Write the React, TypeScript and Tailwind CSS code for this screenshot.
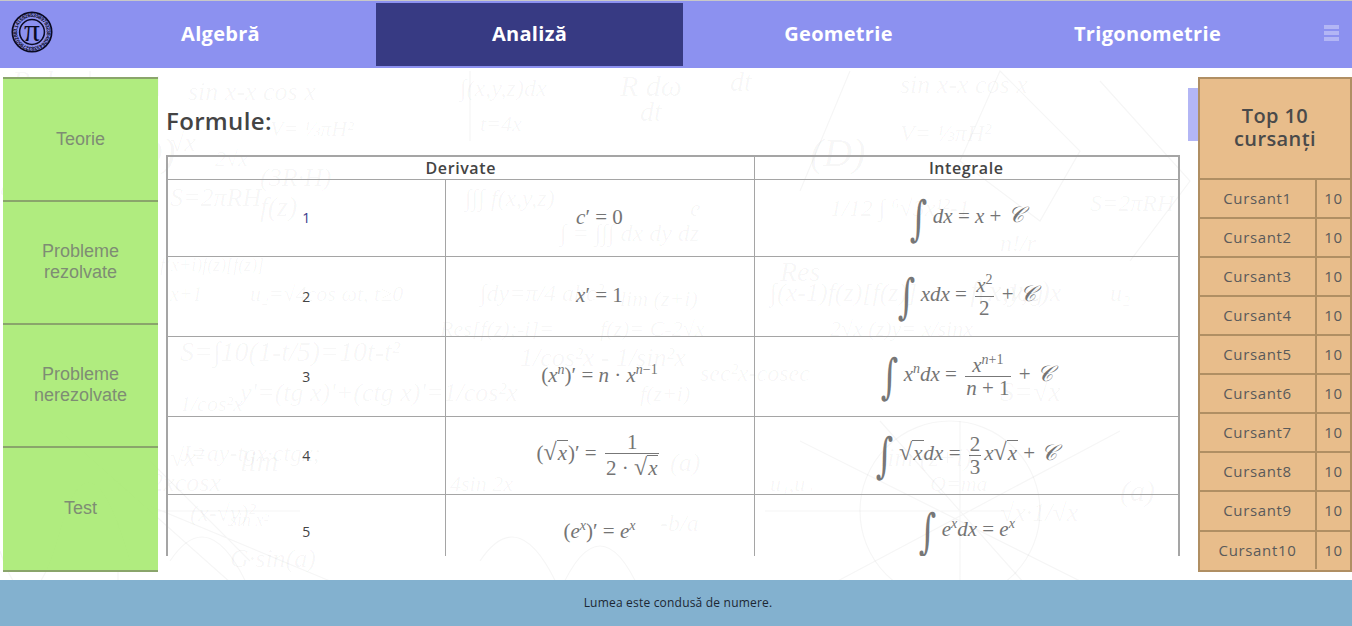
import React from "react";

const UI = "font-['Open_Sans',sans-serif]";

const bgItems: [number, number, number, string][] = [
  [188, 99, 26, "sin x-x cos x"], [12, 90, 30, "R dω"], [30, 118, 30, "dt"], [90, 100, 28, "dt"],
  [8, 140, 24, "lim"], [6, 160, 20, "z→i"], [70, 170, 24, "3i"], [0, 195, 24, "e"], [120, 165, 40, "(D)"],
  [270, 135, 22, "V= ⅓πH²"], [170, 150, 26, "√x"], [215, 165, 22, "2√x"], [260, 185, 26, "(3R·H)"],
  [460, 95, 24, "∫(x,y,z)dx"], [480, 130, 22, "t=4x"], [620, 95, 30, "R dω"], [640, 120, 28, "dt"],
  [900, 92, 26, "sin x-x cos x"], [730, 90, 28, "dt"], [810, 165, 40, "(D)"], [900, 140, 24, "V= ⅓πH²"],
  [30, 230, 22, "x→i"], [70, 255, 30, "f(z)"], [170, 205, 26, "S=2πRH"], [260, 215, 28, "f(z)"],
  [465, 205, 24, "∫∫∫ f(x,y,z)"], [560, 240, 24, "∫ = ∫∫∫ dx dy dz"], [690, 215, 24, "e"],
  [830, 215, 24, "1/12 ∫ ⁶√3x¹²-1"], [1090, 210, 24, "S=2πRH"], [1000, 250, 24, "n!/r"],
  [970, 300, 30, "f(x,y,z)"], [780, 280, 28, "Res"], [160, 270, 18, "f(x+i)f(z)[f(z)]"],
  [3, 320, 22, "(2x-1)(3x)"], [170, 300, 20, "x+1"], [250, 300, 22, "u₂=√4cos ωt, t≥0"],
  [480, 300, 24, "∫dy=π/4 abc²"], [620, 305, 22, "lim (z+i)"], [770, 300, 26, "∫(x-1)f(z)[f(z)]"],
  [1010, 300, 26, "log x"], [1110, 300, 24, "u₂"], [440, 335, 22, "Res[f(z);-i]="],
  [600, 335, 22, "f(z)= C-2√x"], [830, 335, 22, "2√x (z)y= x/sinx"],
  [10, 375, 24, "x+2"], [180, 360, 28, "S=∫10(1-t/5)=10t-t²"], [520, 365, 26, "1/cos²x - 1/sin²x"],
  [700, 380, 24, "sec²x-cosec"], [1000, 400, 28, "S=√x"], [20, 420, 26, "√(1-2)"],
  [180, 410, 22, "1/cos²x"], [240, 400, 26, "y'=(tg x)'+(ctg x)'=1/cos²x"], [640, 400, 22, "f(z+i)"],
  [1210, 300, 24, "∫dT"], [1205, 210, 24, "∫∫f(x,y,z)"], [1210, 120, 22, "dT="],
  [30, 470, 24, "dv"], [170, 465, 26, "√x²"], [60, 490, 26, "dt  2sinx-2xcosx"], [180, 460, 24, "J=ay-tgx·ctgx;"],
  [230, 525, 18, "sin x²"], [670, 470, 26, "(a)"], [880, 465, 26, "lim (z+i)"], [930, 490, 22, "Q=ma"],
  [450, 490, 22, "4sin 2x"], [30, 440, 24, "(a)"], [240, 470, 30, "lim"], [190, 520, 24, "(x-√y)²"],
  [1000, 520, 26, "√x·1/√x"], [5, 510, 30, "G/g"], [770, 490, 22, "u₁,u₂"], [1120, 500, 30, "(a)"],
  [230, 566, 26, "G·sin(a)"], [660, 530, 24, "-b/a"], [1210, 490, 22, "2sinx"], [1210, 545, 24, "(y)"],
];

function Background() {
  return (
    <svg className="absolute inset-0 -z-10" width="1352" height="626" aria-hidden="true">
      <g fontFamily="'Liberation Serif', serif" fontStyle="italic" fill="#000" fillOpacity="0.04">
        {bgItems.map(([x, y, s, t], i) => (
          <text key={i} x={x} y={y} fontSize={s}>{t}</text>
        ))}
      </g>
      <g stroke="#000" strokeOpacity="0.04" fill="none" strokeWidth="1.2">
        <path d="M90 70 V180 M158 75 V95 M470 70 V140" />
        <path d="M150 505 L390 605 M150 460 L250 560 M90 510 L300 510 M118 430 L118 580 M60 430 L240 590" />
        <path d="M765 510 H1010 M960 420 V600 M800 440 L1120 600 M1120 430 L800 600 M880 420 L1040 600" />
        <path d="M0 550 Q30 640 60 530 T130 560 M170 560 Q210 500 250 590 M480 560 Q520 500 560 590 Q600 500 640 590" />
        <circle cx="950" cy="510" r="90" />
        <path d="M1000 70 L1080 150 L1040 220 L960 160 Z M850 70 L800 190" />
        <path d="M1100 80 L1190 180 L1130 260" />
      </g>
    </svg>
  );
}

function Logo() {
  return (
    <svg width="42" height="42" viewBox="0 0 44 44" className="mb-[5px] ml-[11px]">
      <defs>
        <path id="ring" d="M22 22 m-15.6 0 a15.6 15.6 0 1 1 31.2 0 a15.6 15.6 0 1 1 -31.2 0" />
      </defs>
      <circle cx="22" cy="22" r="20.6" fill="none" stroke="#0a0a22" strokeWidth="1.8" />
      <circle cx="22" cy="22" r="13" fill="none" stroke="#0a0a22" strokeWidth="1.6" />
      <text fontSize="5.6" fontWeight="700" fill="#0a0a22" fontFamily="'Liberation Sans', sans-serif" textLength="98">
        <textPath href="#ring">3.14159265358979323846264338327950288</textPath>
      </text>
      <text x="22" y="31" textAnchor="middle" fontSize="33" fill="#0a0a22" fontFamily="'Liberation Serif', serif">π</text>
    </svg>
  );
}

function Nav() {
  const items = ["Algebră", "Analiză", "Geometrie", "Trigonometrie"];
  return (
    <nav className="flex h-[67px] shrink-0 items-stretch bg-[#8c91f0]">
      <div className="flex w-[66px] items-center"><Logo /></div>
      {items.map((t) => (
        <a key={t} className="flex w-[309px] px-[1px] pt-[2px] pb-[2px]">
          <span
            className={`flex flex-1 items-center justify-center pb-[2px] text-[20px] font-bold tracking-[0.3px] text-white ${UI} ${
              t === "Analiză" ? "bg-[#373a83]" : ""
            }`}
          >
            {t}
          </span>
        </a>
      ))}
      <div className="flex flex-1 flex-col items-center justify-center gap-[2px] pl-[9px] pb-[3px]">
        <span className="h-[4px] w-[15px] bg-[#b3b6f5]" />
        <span className="h-[4px] w-[15px] bg-[#b3b6f5]" />
        <span className="h-[4px] w-[15px] bg-[#b3b6f5]" />
      </div>
    </nav>
  );
}

function Sidebar() {
  const items = ["Teorie", "Probleme\nrezolvate", "Probleme\nnerezolvate", "Test"];
  return (
    <aside className="ml-[3px] mt-[9px] flex h-[495px] w-[155px] shrink-0 flex-col border-b-2 border-[#8aa56b] bg-[#a7ea71]/90">
      {items.map((t) => (
        <div
          key={t}
          className="flex h-[123px] items-center justify-center whitespace-pre-line border-t-2 border-[#8aa56b] pb-[1px] text-center text-[18px] leading-[21px] text-[#7e8c74] font-['Liberation_Sans',sans-serif]"
        >
          {t}
        </div>
      ))}
    </aside>
  );
}

const Sup = ({ children }: { children: React.ReactNode }) => (
  <sup className="relative top-[-8px] align-baseline text-[14px] leading-none">{children}</sup>
);
const V = ({ children }: { children: React.ReactNode }) => <i className="italic">{children}</i>;
const Frac = ({ a, b }: { a: React.ReactNode; b: React.ReactNode }) => (
  <span className="mx-[3px] inline-flex flex-col items-center align-middle leading-[20px]">
    <span className="px-[1px] pb-[1px]">{a}</span>
    <span className="w-full border-t border-[#777] px-[1px] pt-[1px] text-center">{b}</span>
  </span>
);
const Root = ({ children }: { children: React.ReactNode }) => (
  <span className="whitespace-nowrap">
    <span className="text-[24px] leading-none">√</span>
    <span className="border-t border-[#777] px-[1px]">{children}</span>
  </span>
);
const Int = () => (
  <span className="-mx-[3px] mr-[2px] inline-block origin-center scale-x-[0.7] align-middle text-[48px] leading-[40px] text-[#777] font-['DejaVu_Serif',serif] font-light">∫</span>
);
const CC = () => <span className="ml-[1px] italic font-['DejaVu_Serif',serif] text-[22px] leading-none">𝒞</span>;

function M({ children }: { children: React.ReactNode }) {
  return (
    <span className="inline-block whitespace-nowrap text-[21px] text-[#747474] font-['Liberation_Serif',serif]">
      {children}
    </span>
  );
}

const rows: [number, React.ReactNode, React.ReactNode, number][] = [
  [1, <M><V>c</V>′ = 0</M>, <M><Int /><V>dx</V> = <V>x</V> + <CC /></M>, 77],
  [2, <M><V>x</V>′ = 1</M>, <M><Int /><V>xdx</V> = <Frac a={<><V>x</V><Sup>2</Sup></>} b="2" /> + <CC /></M>, 80],
  [3, <M>(<V>x</V><Sup><V>n</V></Sup>)′ = <V>n</V> · <V>x</V><Sup><V>n</V>−1</Sup></M>, <M><Int /><V>x</V><Sup><V>n</V></Sup><V>dx</V> = <Frac a={<><V>x</V><Sup><V>n</V>+1</Sup></>} b={<><V>n</V> + 1</>} /> + <CC /></M>, 80],
  [4, <M>(<Root><V>x</V></Root>)′ = <Frac a="1" b={<>2 · <Root><V>x</V></Root></>} /></M>, <M><Int /><Root><V>x</V></Root><V>dx</V> = <Frac a="2" b="3" /><V>x</V><Root><V>x</V></Root> + <CC /></M>, 78],
  [5, <M>(<V>e</V><Sup><V>x</V></Sup>)′ = <V>e</V><Sup><V>x</V></Sup></M>, <M><Int /><V>e</V><Sup><V>x</V></Sup><V>dx</V> = <V>e</V><Sup><V>x</V></Sup></M>, 75],
];

function MainContent() {
  return (
    <main className="ml-[8px] flex w-[1014px] shrink-0 flex-col">
      <h1 className={`mt-[36px] h-[51px] text-[24px] font-semibold leading-[33px] tracking-[0.35px] text-[#444] ${UI}`}>
        Formule:
      </h1>
      <div className="h-[401px] overflow-hidden">
        <table className={`w-[1014px] table-fixed border-collapse border-2 border-[#a5a5a5] text-center text-[14px] text-[#444] ${UI}`}>
          <colgroup>
            <col className="w-[278px]" />
            <col className="w-[309px]" />
            <col />
          </colgroup>
          <thead>
            <tr className="h-[23px]">
              <th colSpan={2} className="border border-[#a5a5a5] p-0 text-[16px] font-semibold leading-none tracking-[0.6px]">Derivate</th>
              <th className="border border-[#a5a5a5] p-0 text-[16px] font-semibold leading-none tracking-[0.6px]">Integrale</th>
            </tr>
          </thead>
          <tbody>
            {rows.map(([n, d, i, h]) => (
              <tr key={n} style={{ height: h }}>
                <td className={`border border-[#a5a5a5] p-0 ${n === 1 ? "text-[#3a3a8a]" : ""}`}>{n}</td>
                <td className="border border-[#a5a5a5] p-0">{d}</td>
                <td className="border border-[#a5a5a5] p-0">{i}</td>
              </tr>
            ))}
          </tbody>
        </table>
      </div>
    </main>
  );
}

function TopList() {
  const people = Array.from({ length: 10 }, (_, i) => `Cursant${i + 1}`);
  return (
    <div className="ml-auto flex items-start">
      <div className="mt-[20px] h-[53px] w-[10px] bg-[#b3b6f5]" />
      <aside className={`mt-[9px] flex h-[495px] w-[154px] flex-col border-2 border-[#b08f63] bg-[#e7b985]/95 ${UI}`}>
        <div className="flex h-[99px] items-center justify-center pb-[4px] text-center text-[20px] font-semibold leading-[23px] tracking-[0.4px] text-[#4a4a4a]">
          Top 10<br />cursanți
        </div>
        {people.map((p, i) => (
          <div key={p} className={`flex border-t-2 border-[#b08f63] pb-[1px] text-[15px] tracking-[0.65px] text-[#5a5a5a] ${i === 8 ? "h-[40px]" : "h-[39px]"}`}>
            <div className="-mb-[1px] flex w-[117px] items-center justify-center border-r-2 border-[#b08f63] pb-[1px]">{p}</div>
            <div className="flex flex-1 items-center justify-center">10</div>
          </div>
        ))}
      </aside>
    </div>
  );
}

export default function App() {
  return (
    <div className="relative isolate flex h-[626px] w-[1352px] flex-col overflow-hidden border-t border-[#c8c8c8] bg-white">
      <Background />
      <Nav />
      <div className="flex flex-1">
        <Sidebar />
        <MainContent />
        <TopList />
      </div>
      <footer className={`flex h-[46px] shrink-0 items-center justify-center bg-[#83b1cf] pl-[4px] text-[12px] tracking-[0.2px] text-[#1c2733] ${UI}`}>
        Lumea este condusă de numere.
      </footer>
    </div>
  );
}
